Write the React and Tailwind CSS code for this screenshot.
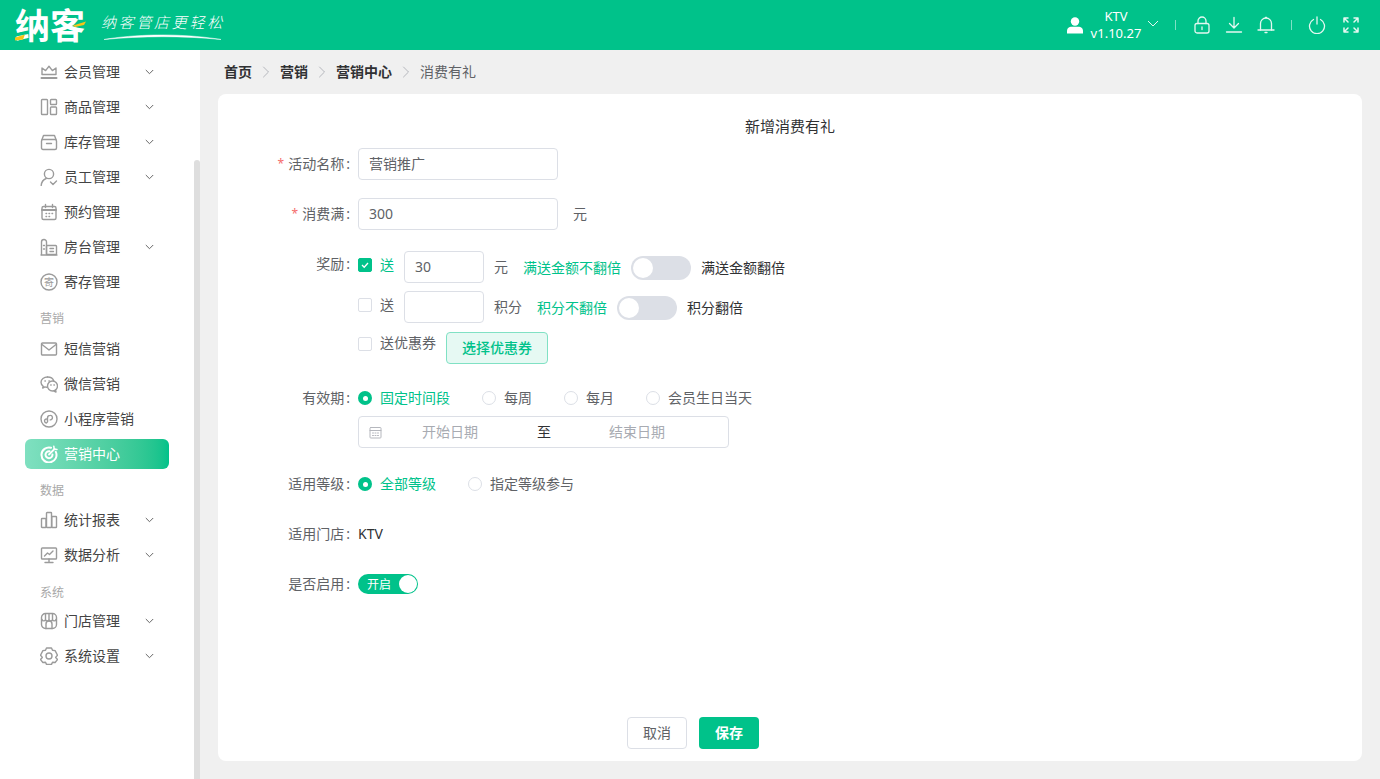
import { ChevronRight } from 'lucide-react';

const GRAY = '#9b9b9b';

function Ico({ children, size = 18, color = GRAY, sw = 1.4, box = 18 }) {
  return (
    <svg width={size} height={size} viewBox={`0 0 ${box} ${box}`} fill="none" stroke={color} strokeWidth={sw} strokeLinecap="round" strokeLinejoin="round" className="shrink-0">
      {children}
    </svg>
  );
}

const icons = {
  crown: <><path d="M2 11.500V5l3.600 2.600L9 3.200l3.400 4.400L16 5v6.500z" /><path d="M1.500 15h15" strokeWidth="2" /></>,
  goods: <><rect x="1.500" y="1.500" width="6" height="15" rx=".8" /><rect x="10.500" y="1.500" width="6" height="5" rx=".8" /><rect x="10.500" y="9" width="6" height="7.500" rx=".8" /></>,
  stock: <><path d="M2 6.500 3.500 2.500h11L16 6.500" /><rect x="1.500" y="6.500" width="15" height="10" rx="1.500" /><path d="M6.500 10.500h5" /></>,
  staff: <><circle cx="9" cy="6" r="4.600" /><path d="M1.200 17.500c.3-4 2.400-6 5-7" /><path d="m10.500 14 2.500 2.500 3.500-3.500" /></>,
  date: <><rect x="2" y="3.500" width="14" height="13" rx="1.500" /><path d="M2 7h14" strokeWidth="2" /><path d="M5.500 1.500v3M12.500 1.500v3" /><path d="M6 10.500h.6M9 10.500h.6M12 10.500h.6M6 13.500h.6M9 13.500h.6" /></>,
  room: <><path d="M1.500 16.500V4a2.500 2.500 0 0 1 5 0v12.500" /><rect x="6.500" y="7.500" width="10" height="9" rx=".8" /><path d="M3.500 7.500h1M3.500 11h1M10 10.500h3.500M10 13.500h3.500" /><path d="M1 17h16" /></>,
  store: <><circle cx="9" cy="9" r="8" /><text x="9" y="12.600" textAnchor="middle" fontSize="10" fill={GRAY} stroke="none">寄</text></>,
  mail: <><rect x="1.500" y="3" width="15" height="12" rx="1" /><path d="m2 4.500 7 5.500 7-5.500" /></>,
  wechat: <><path d="M7.500 2C4 2 1 4.200 1 7.200c0 1.600.9 3 2.200 4l-.5 1.800 2.200-1.100c.6.2 1.300.3 2 .3" /><path d="M7.500 2c3 0 5.500 1.600 6.200 3.800" /><circle cx="12.500" cy="11" r="5" /><path d="m15.500 15 .5 2-2-1" /><path d="M5 6h.3M9 6h.3M10.800 10h.3M14 10h.3" strokeWidth="1.600" /></>,
  mini: <><circle cx="9" cy="9" r="8" /><path d="M7.500 10.200V8a2.700 2.700 0 0 1 2.700-2.600 2.200 2.200 0 0 1 1 4.200 2 2 0 0 1-1 .3" /><path d="M7.500 10.200A2.300 2.300 0 0 1 6.500 13a2 2 0 0 1-1.400-3.400 2.200 2.200 0 0 1 1.400-.6" /></>,
  chart: <><rect x="1.500" y="7.500" width="4.500" height="9" rx=".6" /><rect x="6.500" y="1.500" width="5" height="15" rx=".6" /><rect x="11.800" y="5.500" width="4.700" height="11" rx=".6" /></>,
  analysis: <><rect x="1.500" y="2" width="15" height="11" rx=".8" /><path d="m4.500 10 3-3 2 1.500 3.500-3.500" /><path d="M9 13v3M5 16.500h8" /></>,
  shop: <><rect x="1.500" y="1.500" width="15" height="15" rx="4" /><path d="M5.500 2v5.500a1.800 1.800 0 0 1-3.500 0M5.500 7.500a1.800 1.800 0 0 0 3.500 0V2M9 7.500a1.800 1.800 0 0 0 3.500 0V2M12.500 7.500a1.800 1.800 0 0 0 3.500 0" /><path d="M6 16.500V12a3 3 0 0 1 6 0v4.500" /></>,
  gear: <><path d="M6.500 1.500h5l1 2.400 2.600.4 2.400 4.700-1.700 2-.1.4 1.800 2.100-2.400 3-2.600-.3-1 2.200h-5l-1-2.200-2.600.3-2.400-3 1.800-2.100-.1-.4L.5 9l2.400-4.700 2.600-.4z" transform="translate(0 -.5) scale(1 .97)" /><circle cx="9" cy="9" r="3" /></>,
  target: <><path d="M11 2.700A7.500 7.500 0 1 0 15.800 6.800" strokeWidth="2" /><path d="M9.500 6.200A3.500 3.500 0 1 0 12.500 9.500" strokeWidth="2" /><path d="m9 9.500 5.500-5.500" strokeWidth="1.800" /><path d="m13.800 1.200.4 2.800 2.800.4" strokeWidth="1.500" /></>,
};

const nav = [
  { t: '会员管理', i: 'crown', c: 1 },
  { t: '商品管理', i: 'goods', c: 1 },
  { t: '库存管理', i: 'stock', c: 1 },
  { t: '员工管理', i: 'staff', c: 1 },
  { t: '预约管理', i: 'date' },
  { t: '房台管理', i: 'room', c: 1 },
  { t: '寄存管理', i: 'store' },
  { label: '营销', h: 'h-[32px] pt-[7px]' },
  { t: '短信营销', i: 'mail' },
  { t: '微信营销', i: 'wechat' },
  { t: '小程序营销', i: 'mini' },
  { t: '营销中心', i: 'target', active: 1 },
  { label: '数据', h: 'h-[31px] pt-[8px]' },
  { t: '统计报表', i: 'chart', c: 1 },
  { t: '数据分析', i: 'analysis', c: 1 },
  { label: '系统', h: 'h-[31px] pt-[9px]' },
  { t: '门店管理', i: 'shop', c: 1 },
  { t: '系统设置', i: 'gear', c: 1 },
];

function Sidebar() {
  return (
    <aside className="relative w-[200px] shrink-0 bg-white pt-[4.5px]">
      {nav.map(n => n.label ? (
        <div key={n.label} className={`${n.h} pl-[40px] flex items-center text-xs text-[#a8a8a8]`}>{n.label}</div>
      ) : (
        <div key={n.t} className="h-[35px] flex items-center">
          <div className={`ml-[25px] w-[144px] flex items-center pl-[15px] ${n.active ? 'h-[30px] rounded-md bg-gradient-to-r from-[#7fe0c0] to-[#00c28a] text-white' : 'h-[35px] text-[#444]'}`}>
            <Ico color={n.active ? '#fff' : GRAY}>{icons[n.i]}</Ico>
            <span className="ml-[6px] text-sm">{n.t}</span>
            {n.c && (
              <svg width="9" height="6" viewBox="0 0 9 6" fill="none" stroke="#666" strokeWidth="1" className="ml-auto mr-[15px]"><path d="m.8 1 3.700 3.700L8.200 1" /></svg>
            )}
          </div>
        </div>
      ))}
      <div className="absolute right-0 top-[110px] bottom-0 w-[6px] rounded-t bg-[#dedede]" />
    </aside>
  );
}

function Header() {
  return (
    <header className="h-[50px] shrink-0 bg-[#00c28a] flex items-center text-white">
      <div className="relative ml-[15px] w-[72px] h-[36px] flex items-center">
        <span className="text-[35px] leading-none font-bold whitespace-nowrap">纳客</span>
        <svg width="72" height="36" viewBox="0 0 72 36" fill="none" className="absolute left-0 top-0">
          <path d="M0 30.500 10 27.500 8 32.500 0 33.500z" fill="#f6c518" />
          <path d="M58 18.500 71 14.500 69 18 60 20z" fill="#f6c518" />
        </svg>
      </div>
      <div className="relative ml-[14px] w-[126px] h-[38px] pt-[6px]">
        <div className="text-[15px] leading-[20px] font-light italic tracking-[2.7px] whitespace-nowrap">纳客管店更轻松</div>
        <svg width="122" height="8" viewBox="0 0 122 8" fill="none" className="absolute left-[2px] top-[27px]">
          <path d="M1 6.500C30 1.500 75-.5 118 6.500 78 2.500 38 3 1 6.500z" fill="#fff" stroke="#fff" strokeWidth=".5" />
        </svg>
      </div>

      <div className="ml-auto mr-[20px] flex items-center">
        <svg width="16" height="17" viewBox="0 0 16 17" fill="#fff"><circle cx="8" cy="4.500" r="4.200" /><path d="M0 16.500v-2.500C0 11 2.500 9.800 4.500 9.800h7c2 0 4.500 1.200 4.500 4.200v2.500z" /></svg>
        <div className="ml-[7px] w-[52px] text-center text-[13px] leading-[17px] whitespace-nowrap">
          <div>KTV</div>
          <div>v1.10.27</div>
        </div>
        <svg width="12" height="7" viewBox="0 0 12 7" fill="none" stroke="#e4f8f1" strokeWidth="1" className="ml-[5px] mb-[3px]"><path d="m1 1 5 5 5-5" /></svg>
        <div className="ml-[16px] w-px h-[10px] bg-white/50" />
        <div className="ml-[17px]">
          <Ico color="#e4f8f1" sw={1.300}><rect x="2" y="7.500" width="14" height="9.500" rx="2" /><path d="M5 7.500V5a4 4 0 0 1 8 0v2.500" /><path d="M9 11v2.500" /></Ico>
        </div>
        <div className="ml-[14px]">
          <Ico color="#e4f8f1" sw={1.300}><path d="M9 1.500v10M4.500 7.500 9 12l4.500-4.500" /><path d="M1.500 16h15" /></Ico>
        </div>
        <div className="ml-[14px]">
          <Ico color="#e4f8f1" sw={1.300}><path d="M3.500 14V7.500a5.500 5.500 0 0 1 11 0V14" /><path d="M1 14h16M8 16.500h2M8.500 1.500h1" /></Ico>
        </div>
        <div className="ml-[16px] w-px h-[10px] bg-white/50" />
        <div className="ml-[16px]">
          <Ico color="#e4f8f1" sw={1.300}><path d="M5.500 3.500a7.500 7.500 0 1 0 7 0" /><path d="M9 1v7" /></Ico>
        </div>
        <div className="ml-[16px]">
          <Ico color="#e4f8f1" sw={1.500}><path d="M2 6V2h4M2 2l4 4M12 2h4v4M16 2l-4 4M2 12v4h4M2 16l4-4M16 12v4h-4M16 16l-4-4" /></Ico>
        </div>
      </div>
    </header>
  );
}

function Crumbs() {
  const sep = <ChevronRight size={20} strokeWidth={1} className="mx-[4px] text-[#a8abb2]" />;
  return (
    <div className="h-[44px] shrink-0 pl-[6px] flex items-center text-sm">
      <b className="font-bold text-[#303133]">首页</b>{sep}
      <b className="font-bold text-[#303133]">营销</b>{sep}
      <b className="font-bold text-[#303133]">营销中心</b>{sep}
      <span className="text-[#606266]">消费有礼</span>
    </div>
  );
}

function Label({ children, req, className = 'h-[32px]' }) {
  return (
    <div className={`w-[132px] mr-[8px] shrink-0 flex items-center justify-end text-sm text-[#606266] whitespace-nowrap ${className}`}>
      {req && <span className="mr-[4px] text-xs text-[#f56c6c]">*</span>}
      {children}<span className="ml-[2px]">:</span>
    </div>
  );
}

function Input({ value, w = 'w-[200px]' }) {
  return <div className={`${w} h-[32px] px-[10px] flex items-center rounded border border-[#dcdfe6] bg-white text-sm text-[#606266]`}>{value}</div>;
}

function Check({ on }) {
  return (
    <span className={`w-[14px] h-[14px] rounded-[2px] flex items-center justify-center border ${on ? 'bg-[#00c28a] border-[#00c28a]' : 'bg-white border-[#dcdfe6]'}`}>
      {on && <svg width="10" height="10" viewBox="0 0 10 10" fill="none" stroke="#fff" strokeWidth="1.300"><path d="m2 5 2.200 2.200L8 3" /></svg>}
    </span>
  );
}

function Radio({ on, children, className = '' }) {
  return (
    <div className={`flex items-center text-sm ${on ? 'text-[#00c28a]' : 'text-[#606266]'} ${className}`}>
      {on
        ? <span className="w-[14px] h-[14px] rounded-full bg-[#00c28a] flex items-center justify-center"><span className="w-[5px] h-[5px] rounded-full bg-white" /></span>
        : <span className="w-[14px] h-[14px] rounded-full border border-[#dcdfe6] bg-white" />}
      <span className="ml-[8px]">{children}</span>
    </div>
  );
}

function Toggle() {
  return (
    <div className="w-[60px] h-[24px] rounded-full bg-[#dcdfe6] flex items-center pl-[2px]">
      <span className="w-[20px] h-[20px] rounded-full bg-white" />
    </div>
  );
}

function Form() {
  return (
    <div className="mt-[12px] flex-1 flex flex-col">
      <div className="flex">
        <Label req>活动名称</Label>
        <Input value="营销推广" />
      </div>

      <div className="flex mt-[18px]">
        <Label req>消费满</Label>
        <Input value="300" />
        <span className="ml-[15px] h-[32px] flex items-center text-sm text-[#606266]">元</span>
      </div>

      <div className="flex mt-[21px]">
        <Label className="h-[26px]">奖励</Label>
        <div className="flex flex-col">
          <div className="flex items-start">
            <div className="h-[28px] flex items-center"><Check on /><span className="ml-[8px] w-[24px] text-sm text-[#00c28a]">送</span></div>
            <Input value="30" w="w-[80px]" />
            <div className="ml-[10px] h-[32px] pt-[2px] flex items-center text-sm">
              <span className="mb-[2px] text-[#606266]">元</span>
              <span className="ml-[15px] text-[#00c28a]">满送金额不翻倍</span>
              <span className="ml-[10px]"><Toggle /></span>
              <span className="ml-[10px] text-[#303133]">满送金额翻倍</span>
            </div>
          </div>
          <div className="flex items-start mt-[8px]">
            <div className="h-[27px] flex items-center"><Check /><span className="ml-[8px] w-[24px] text-sm text-[#606266]">送</span></div>
            <Input value="" w="w-[80px]" />
            <div className="ml-[10px] h-[32px] pt-[2px] flex items-center text-sm">
              <span className="mb-[2px] text-[#606266]">积分</span>
              <span className="ml-[15px] text-[#00c28a]">积分不翻倍</span>
              <span className="ml-[10px]"><Toggle /></span>
              <span className="ml-[10px] text-[#303133]">积分翻倍</span>
            </div>
          </div>
          <div className="flex items-start mt-[9px]">
            <div className="h-[24px] flex items-center"><Check /><span className="ml-[8px] mb-[2px] text-sm text-[#606266]">送优惠券</span></div>
            <button className="ml-[10px] w-[102px] h-[32px] rounded border border-[#80e1c4] bg-[#e6f9f3] text-sm font-medium text-[#00c28a]">选择优惠券</button>
          </div>
        </div>
      </div>

      <div className="flex items-center mt-[24px]">
        <Label className="h-[20px]">有效期</Label>
        <Radio on>固定时间段</Radio>
        <Radio className="ml-[32px]">每周</Radio>
        <Radio className="ml-[32px]">每月</Radio>
        <Radio className="ml-[32px]">会员生日当天</Radio>
      </div>
      <div className="ml-[140px] mt-[8px] w-[371px] h-[32px] pl-[10px] flex items-center rounded border border-[#dcdfe6] text-sm">
        <Ico size={13} box={13} color="#b5b7bd" sw={1}><rect x="1" y="1.500" width="11" height="10.500" rx=".8" /><path d="M1 4.500h11M3.500 7h1M6 7h1M8.500 7h1M3.500 9.500h1M6 9.500h1M8.500 9.500h1" /></Ico>
        <span className="ml-[40px] text-[#a8abb2]">开始日期</span>
        <span className="ml-[59px] text-[#303133]">至</span>
        <span className="ml-[58px] text-[#a8abb2]">结束日期</span>
      </div>

      <div className="flex items-center mt-[26px]">
        <Label className="h-[20px]">适用等级</Label>
        <Radio on>全部等级</Radio>
        <Radio className="ml-[32px]">指定等级参与</Radio>
      </div>

      <div className="flex items-center mt-[30px]">
        <Label className="h-[20px]">适用门店</Label>
        <span className="text-sm text-[#303133]">KTV</span>
      </div>

      <div className="flex items-center mt-[30px]">
        <Label className="h-[20px]">是否启用</Label>
        <div className="w-[60px] h-[20px] rounded-full bg-[#00c28a] flex items-center pl-[9px] pr-px text-xs text-white">
          <span className="pt-px">开启</span>
          <span className="ml-auto w-[18px] h-[18px] rounded-full bg-white" />
        </div>
      </div>

      <div className="mt-auto mb-[12px] ml-[409px] flex gap-[12px]">
        <button className="w-[60px] h-[32px] rounded border border-[#dcdfe6] bg-white text-sm text-[#606266]">取消</button>
        <button className="w-[60px] h-[32px] rounded bg-[#00c28a] text-sm font-bold text-white">保存</button>
      </div>
    </div>
  );
}

export default function App() {
  return (
    <div className="h-screen flex flex-col overflow-hidden bg-[#f0f0f0] font-['Noto_Sans','Noto_Sans_CJK_SC',sans-serif]">
      <Header />
      <div className="flex-1 flex min-h-0">
        <Sidebar />
        <main className="flex-1 flex flex-col pl-[18px] pr-[18px] pb-[18px] min-w-0">
          <Crumbs />
          <div className="flex-1 flex flex-col rounded-lg bg-white pt-[22px]">
            <h2 className="h-[20px] leading-[20px] text-center text-[15px] text-[#303133]">新增消费有礼</h2>
            <Form />
          </div>
        </main>
      </div>
    </div>
  );
}
